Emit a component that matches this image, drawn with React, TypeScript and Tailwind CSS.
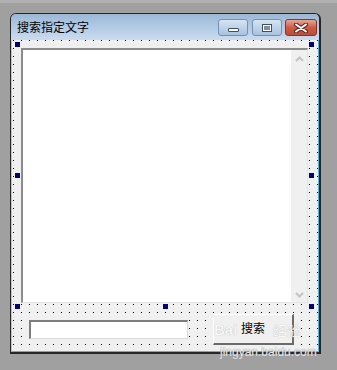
function Handle({ className }: { className: string }) {
  return <div className={`absolute w-[5px] h-[5px] bg-[#000080] ${className}`} />;
}

function Chevron({ up }: { up?: boolean }) {
  return (
    <svg width="9" height="6" viewBox="0 0 9 6" className="block">
      <path
        d={up ? "M1 5 L4.5 1.5 L8 5" : "M1 1 L4.5 4.5 L8 1"}
        fill="none"
        stroke="#c4c4c4"
        strokeWidth="2"
      />
    </svg>
  );
}

export default function App() {
  return (
    <div className="relative w-[337px] h-[370px] overflow-hidden bg-[#a0a0a0] font-['Noto_Sans_CJK_SC','Noto_Sans',sans-serif]">
      <div className="h-[3px] bg-[#b0b0b0]" />

      {/* window */}
      <div className="ml-[10px] mt-[10px] w-[311px] h-[341px] flex flex-col rounded-t-[6px] border-l border-t border-r-2 border-b-2 border-[#262626] overflow-hidden">
        {/* title bar */}
        <div className="h-[26px] shrink-0 flex bg-gradient-to-b from-[#9bb8d7] to-[#cadcf1] pl-[6px] pr-[2px]">
          <span className="self-center text-[12px] leading-none text-black">搜索指定文字</span>
          <div className="ml-auto mt-[5px] flex">
            <div className="w-[30px] h-[17px] rounded-[3px] border border-[#7391b5] bg-gradient-to-b from-[#d6e4f3] to-[#a8c2de] flex justify-center items-end pb-[3px]">
              <div className="w-[11px] h-[4px] rounded-[1px] border border-[#3e5068] bg-white" />
            </div>
            <div className="ml-[4px] w-[30px] h-[17px] rounded-[3px] border border-[#7391b5] bg-gradient-to-b from-[#d6e4f3] to-[#a8c2de] flex justify-center items-center">
              <div className="w-[10px] h-[8px] border border-[#3e5068] bg-white p-[1px]">
                <div className="w-full h-full bg-[#7d8fa6]" />
              </div>
            </div>
            <div className="ml-[3px] w-[32px] h-[17px] rounded-[3px] border border-[#8a3426] bg-gradient-to-b from-[#e8a596] via-[#cf5a43] to-[#c24a33] flex justify-center items-center">
              <svg width="14" height="10" viewBox="0 0 14 10">
                <path d="M2 1.5 L12 8.5 M12 1.5 L2 8.5" stroke="#5a2a22" strokeWidth="4" strokeLinecap="round" />
                <path d="M2 1.5 L12 8.5 M12 1.5 L2 8.5" stroke="#ffffff" strokeWidth="2" strokeLinecap="round" />
              </svg>
            </div>
          </div>
        </div>

        {/* client frame */}
        <div className="flex-1 flex flex-col border-l border-r border-b border-l-[#a9cbe9] border-r-[#4cb6ea] border-b-[#4cb6ea]">
          <div className="relative flex-1 bg-[#f0f0f0] bg-[conic-gradient(at_1px_1px,transparent_75%,#000_0)] bg-[length:8px_8px] bg-[position:1px_0px]">
            {/* multiline edit */}
            <div className="ml-[9px] mt-[8px] w-[287px] h-[255px] flex border-t-2 border-l-2 border-b border-r border-t-[#8c8c8c] border-l-[#8c8c8c] border-b-[#e4e4e4] border-r-[#e4e4e4]">
              <div className="flex-1 bg-white" />
              <div className="w-[16px] bg-[#f0f0f0] flex flex-col items-center justify-between pt-[6px] pb-[4px]">
                <Chevron up />
                <Chevron />
              </div>
            </div>

            {/* bottom row */}
            <div className="mt-[11px] pl-[17px] flex items-start">
              <div className="mt-[6px] w-[159px] h-[19px] bg-white border-t-2 border-l-2 border-b border-r border-t-[#7d7d7d] border-l-[#7d7d7d] border-b-[#dcdcdc] border-r-[#dcdcdc]" />
              <button className="ml-[25px] w-[81px] h-[31px] bg-[#f0f0f0] border-t border-l border-b-2 border-r-2 border-t-white border-l-white border-b-[#6a6a6a] border-r-[#6a6a6a] flex items-center justify-center pb-[2px] text-[12px] text-black">
                搜索
              </button>
            </div>

            {/* selection handles */}
            <Handle className="left-[3px] top-[2px]" />
            <Handle className="left-[297px] top-[2px]" />
            <Handle className="left-[3px] top-[133px]" />
            <Handle className="left-[297px] top-[133px]" />
            <Handle className="left-[3px] top-[264px]" />
            <Handle className="left-[151px] top-[264px]" />
            <Handle className="left-[297px] top-[264px]" />
          </div>
        </div>
      </div>

      {/* watermark */}
      <span className="absolute left-[214px] top-[322px] font-['Liberation_Sans',sans-serif] font-bold text-[15px] leading-none text-[#f7f7f7] [text-shadow:0_0_1px_#a8a8a8] pointer-events-none">
        Bai
      </span>
      <span className="absolute left-[273px] top-[323px] text-[14px] leading-none text-[#f7f7f7] [text-shadow:0_0_1px_#a8a8a8] pointer-events-none">
        经验
      </span>
      <div className="absolute left-[220px] top-[346px] font-['Liberation_Sans',sans-serif] text-[12px] leading-none text-[#e4e4e4] [text-shadow:0_0_1px_#8a8a8a] pointer-events-none">
        jingyan.baidu.com
      </div>
    </div>
  );
}
